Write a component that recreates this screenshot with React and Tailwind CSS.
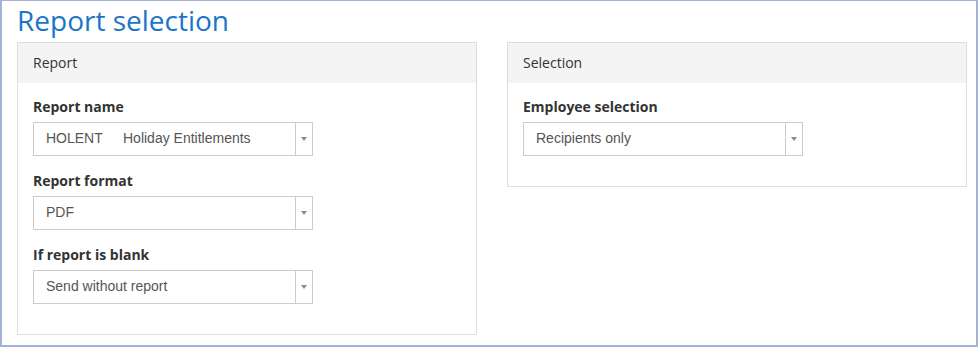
import React from "react";

const sans = { fontFamily: '"Open Sans", sans-serif' };

function Select({ children }) {
  return (
    <div className="flex h-[34px] w-[280px] border border-[#cccccc] bg-white">
      <div
        className="flex flex-1 items-center pb-[2px] pl-[12px] text-[14px] text-[#555555]"
        style={{ fontFamily: '"Liberation Sans", Arial, sans-serif' }}
      >
        {children}
      </div>
      <div className="flex w-[17px] items-center justify-center border-l border-[#cccccc]">
        <div className="h-0 w-0 border-l-[3px] border-r-[3px] border-t-[4px] border-l-transparent border-r-transparent border-t-[#8a8a8a]" />
      </div>
    </div>
  );
}

function Field({ label, children }) {
  return (
    <div className="mb-[15px]">
      <div className="mb-[5px] text-[14px] font-bold leading-[20px] text-[#333333]">{label}</div>
      <Select>{children}</Select>
    </div>
  );
}

function Panel({ title, children }) {
  return (
    <div className="w-[460px] self-start border border-[#dddddd] bg-white">
      <div className="flex h-[40px] items-center bg-[#f4f4f4] px-[15px] pb-[2px] text-[14px] text-[#333333]">
        {title}
      </div>
      <div className="px-[15px] pb-[15px] pt-[14px]">{children}</div>
    </div>
  );
}

export default function App() {
  return (
    <div className="h-[348px] w-[979px] bg-white" style={sans}>
      <div className="h-[347px] w-[978px] border-x-2 border-b-2 border-t border-[#a2b3d6] bg-white">
        <h1 className="h-[41px] pl-[15px] pt-[1px] text-[28px] font-normal leading-[36px] text-[#1b75c7]">
          Report selection
        </h1>
        <div className="flex gap-[30px] pl-[15px]">
          <Panel title="Report">
            <Field label="Report name">
              <span className="inline-block w-[77px]">HOLENT</span>
              <span>Holiday Entitlements</span>
            </Field>
            <Field label="Report format">PDF</Field>
            <Field label="If report is blank">Send without report</Field>
          </Panel>
          <Panel title="Selection">
            <Field label="Employee selection">Recipients only</Field>
          </Panel>
        </div>
      </div>
    </div>
  );
}
